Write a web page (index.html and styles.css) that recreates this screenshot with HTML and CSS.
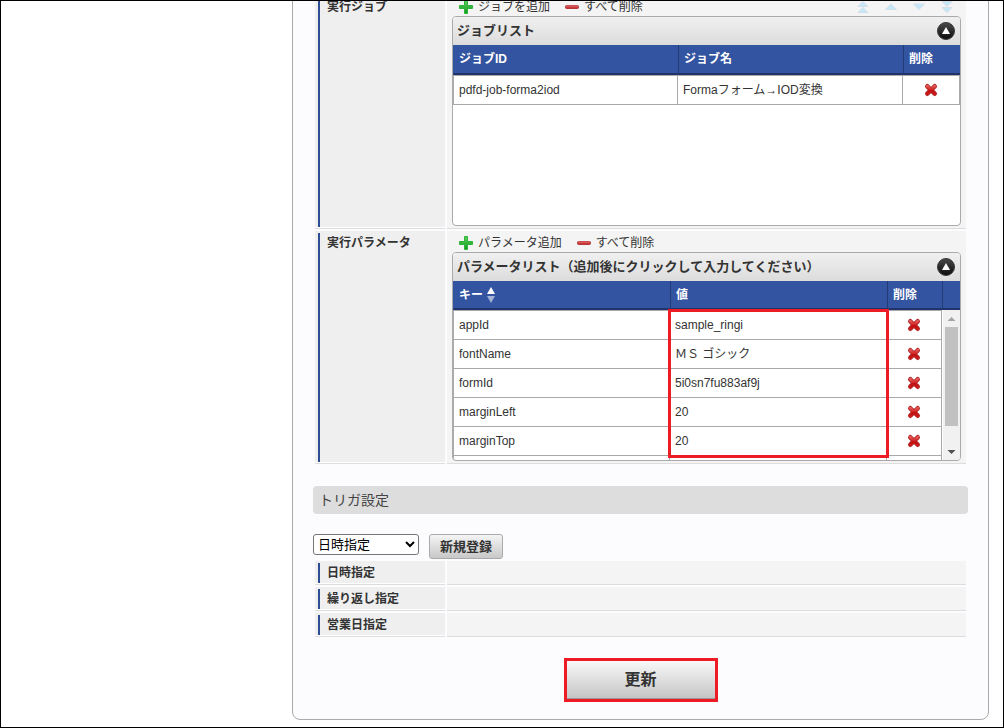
FILE: index.html
```html
<!DOCTYPE html>
<html lang="ja">
<head>
	<meta charset="utf-8">
	<title>ジョブネット編集</title>
	<link rel="stylesheet" href="styles.css">
</head>
<body>
	<!-- shared icons -->
	<svg class="defs" width="0" height="0">
		<defs>
			<linearGradient id="green" x1="0" y1="0" x2="0" y2="1">
				<stop offset="0" stop-color="#5fd05f"/>
				<stop offset="1" stop-color="#0c9a1c"/>
			</linearGradient>
			<linearGradient id="red" gradientUnits="userSpaceOnUse" x1="0" y1="2" x2="0" y2="14">
				<stop offset="0" stop-color="#ee7070"/>
				<stop offset="0.45" stop-color="#d42a2a"/>
				<stop offset="0.55" stop-color="#c01010"/>
				<stop offset="1" stop-color="#d02020"/>
			</linearGradient>
			<linearGradient id="dark" x1="0" y1="0" x2="0" y2="1">
				<stop offset="0" stop-color="#4a4a4a"/>
				<stop offset="1" stop-color="#0c0c0c"/>
			</linearGradient>
		</defs>
		<symbol id="plus" viewBox="0 0 16 16">
			<path d="M6.5 1.5h3v5h5v3h-5v5h-3v-5h-5v-3h5z" fill="url(#green)" stroke="#2db53a" stroke-linejoin="round"/>
		</symbol>
		<symbol id="minus" viewBox="0 0 16 16">
			<rect x="1.5" y="6.5" width="13" height="3" rx="1" fill="#c93a3a" stroke="#b53434"/>
			<path d="M2 7h12" stroke="#e07070"/>
		</symbol>
		<symbol id="cross" viewBox="0 0 16 16">
			<path d="M4.300 4.300l7.400 7.400M11.700 4.300l-7.400 7.400" stroke="#b02626" stroke-width="4.600" stroke-linecap="round"/>
			<path d="M4.300 4.300l7.400 7.400M11.700 4.300l-7.400 7.400" stroke="url(#red)" stroke-width="3" stroke-linecap="round"/>
		</symbol>
		<symbol id="collapse" viewBox="0 0 18 18">
			<circle cx="9" cy="9" r="8.500" fill="url(#dark)" stroke="#3a3a3a"/>
			<path d="M9 5l4 7h-8z" fill="#fff"/>
		</symbol>
		<symbol id="up" viewBox="0 0 16 16">
			<path d="M8 5l5.500 5.500h-11z" fill="#c5e8f8" stroke="#d3dfea" stroke-linejoin="round"/>
		</symbol>
		<symbol id="down" viewBox="0 0 16 16">
			<path d="M8 10.500l5.500-5.500h-11z" fill="#c5e8f8" stroke="#d3dfea" stroke-linejoin="round"/>
		</symbol>
		<symbol id="top" viewBox="0 0 16 16">
			<path d="M8 2.500l5 5H3zM8 8.500l5 5H3z" fill="#c5e8f8" stroke="#d3dfea" stroke-linejoin="round"/>
		</symbol>
		<symbol id="bottom" viewBox="0 0 16 16">
			<path d="M8 7.500l5-5H3zM8 13.500l5-5H3z" fill="#c5e8f8" stroke="#d3dfea" stroke-linejoin="round"/>
		</symbol>
	</svg>

	<main class="panel">
		<div class="form">
			<div class="row">
				<div class="label"><span>実行ジョブ</span></div>
				<div class="value">
					<div class="toolbar">
						<button type="button" class="tool"><svg><use href="#plus"/></svg>ジョブを追加</button>
						<button type="button" class="tool"><svg><use href="#minus"/></svg>すべて削除</button>
						<div class="order">
							<button type="button" class="tool" aria-label="先頭へ"><svg><use href="#top"/></svg></button>
							<button type="button" class="tool" aria-label="上へ"><svg><use href="#up"/></svg></button>
							<button type="button" class="tool" aria-label="下へ"><svg><use href="#down"/></svg></button>
							<button type="button" class="tool" aria-label="末尾へ"><svg><use href="#bottom"/></svg></button>
						</div>
					</div>
					<section class="list">
						<div class="list-title">
							<h2>ジョブリスト</h2>
							<button type="button" class="collapse" aria-label="折りたたむ"><svg><use href="#collapse"/></svg></button>
						</div>
						<div class="view job-view">
							<table>
								<thead>
									<tr><th>ジョブID</th><th>ジョブ名</th><th class="del">削除</th></tr>
								</thead>
								<tbody>
									<tr>
										<td>pdfd-job-forma2iod</td>
										<td>Formaフォーム→IOD変換</td>
										<td class="del"><button type="button" aria-label="削除"><svg><use href="#cross"/></svg></button></td>
									</tr>
								</tbody>
							</table>
						</div>
					</section>
				</div>
			</div>

			<div class="row">
				<div class="label"><span>実行パラメータ</span></div>
				<div class="value">
					<div class="toolbar">
						<button type="button" class="tool"><svg><use href="#plus"/></svg>パラメータ追加</button>
						<button type="button" class="tool"><svg><use href="#minus"/></svg>すべて削除</button>
					</div>
					<section class="list">
						<div class="list-title">
							<h2>パラメータリスト（追加後にクリックして入力してください）</h2>
							<button type="button" class="collapse" aria-label="折りたたむ"><svg><use href="#collapse"/></svg></button>
						</div>
						<div class="view param-view">
							<table>
								<thead>
									<tr>
										<th>キー<svg class="sort" viewBox="0 0 8 16"><path d="M4 0l4 7H0z" fill="#fff"/><path d="M4 16l4-7H0z" fill="#a5b3d6"/></svg></th>
										<th>値</th>
										<th class="del">削除</th>
									</tr>
								</thead>
								<tbody>
									<tr>
										<td>appId</td>
										<td class="marked">sample_ringi<div class="mark"></div></td>
										<td class="del"><button type="button" aria-label="削除"><svg><use href="#cross"/></svg></button></td>
									</tr>
									<tr>
										<td>fontName</td>
										<td>ＭＳ ゴシック</td>
										<td class="del"><button type="button" aria-label="削除"><svg><use href="#cross"/></svg></button></td>
									</tr>
									<tr>
										<td>formId</td>
										<td>5i0sn7fu883af9j</td>
										<td class="del"><button type="button" aria-label="削除"><svg><use href="#cross"/></svg></button></td>
									</tr>
									<tr>
										<td>marginLeft</td>
										<td>20</td>
										<td class="del"><button type="button" aria-label="削除"><svg><use href="#cross"/></svg></button></td>
									</tr>
									<tr>
										<td>marginTop</td>
										<td>20</td>
										<td class="del"><button type="button" aria-label="削除"><svg><use href="#cross"/></svg></button></td>
									</tr>
									<tr><td></td><td></td><td></td></tr>
								</tbody>
							</table>
							<div class="side">
								<div class="side-head"></div>
								<div class="scrollbar">
									<svg viewBox="0 0 17 17"><path d="M8.500 7l4 4h-8z" fill="#a3a3a3"/></svg>
									<div class="thumb"></div>
									<svg viewBox="0 0 17 17"><path d="M8.500 11l4-4h-8z" fill="#505050"/></svg>
								</div>
							</div>
						</div>
					</section>
				</div>
			</div>
		</div>

		<h1>トリガ設定</h1>

		<div class="trigger">
			<select aria-label="トリガ種別">
				<option>日時指定</option>
				<option>繰り返し指定</option>
				<option>営業日指定</option>
			</select>
			<button type="button" class="btn">新規登録</button>
		</div>

		<div class="form">
			<div class="row"><div class="label"><span>日時指定</span></div><div class="value"></div></div>
			<div class="row"><div class="label"><span>繰り返し指定</span></div><div class="value"></div></div>
			<div class="row"><div class="label"><span>営業日指定</span></div><div class="value"></div></div>
		</div>

		<div class="submit">
			<button type="submit" class="update">更新</button>
		</div>
	</main>
</body>
</html>
```

FILE: styles.css
```css
* {
	box-sizing: border-box;
	margin: 0;
	padding: 0;
}

body {
	min-height: 100vh;
	padding: 0 14px 7px 291px;
	border: 1px solid #000;
	background: #fff;
	font: 12px/18px "Liberation Sans", "Noto Sans CJK JP", sans-serif;
	color: #333;
	overflow: hidden;
}

button {
	border: 0;
	background: none;
	font: inherit;
	color: inherit;
	cursor: pointer;
}

svg {
	display: block;
	flex: none;
	width: 16px;
	height: 16px;
}

.defs {
	position: absolute;
	width: 0;
	height: 0;
}

.panel {
	margin-top: -9px;
	padding: 0 20px 17px;
	border: 1px solid #aaa;
	border-radius: 0 0 8px 8px;
	background: #fcfcff;
}

/* label / value rows */
.form {
	padding: 2px 2px 0;
}

.row {
	display: grid;
	grid-template-columns: 130px 1fr;
	gap: 2px;
	min-height: 24px;
	margin-bottom: 2px;
}

.label {
	display: flex;
	padding: 2px 0 1px 3px;
	border-bottom: 1px solid #ddd;
	background: #efefef;
	box-shadow: inset 0 -1px #fff;
	font-weight: bold;
	line-height: 20px;
}

.label span {
	padding-left: 7px;
	border-left: 2px solid #2e4e94;
}

.value {
	padding: 0 5px;
	border-bottom: 1px solid #ddd;
	background: #f4f4f4;
}

.toolbar {
	display: flex;
	gap: 14px;
	height: 21px;
	padding: 2px 6px 0;
}

.tool {
	display: flex;
	align-items: center;
	gap: 4px;
	height: 20px;
}

.order {
	display: flex;
	gap: 12px;
	margin-left: auto;
}

/* lists */
.list {
	margin-bottom: 2px;
	border: 1px solid #aaa;
	border-radius: 4px;
	background: #fff;
	overflow: hidden;
}

.list-title {
	display: flex;
	align-items: center;
	justify-content: space-between;
	height: 28px;
	padding: 0 5px 0 4px;
	background: linear-gradient(#f0f0f0, #dcdcdc);
}

.list-title h2 {
	font-size: 13px;
}

.collapse svg {
	width: 18px;
	height: 18px;
}

.view {
	overflow: hidden;
}

.job-view {
	height: 180px;
}

.param-view {
	display: grid;
	grid-template-columns: 1fr 18px;
	grid-template-rows: 100%;
	align-items: start;
	height: 179px;
}

table {
	width: 100%;
	border-collapse: separate;
	border-spacing: 0;
	table-layout: fixed;
}

th, td {
	padding: 0 5px;
	text-align: left;
}

th {
	height: 29px;
	border-left: 1px solid #233c75;
	border-bottom: 2px solid #20336a;
	background: #3354a0;
	color: #fff;
}

.job-view th {
	height: 30px;
}

th:first-child {
	border-left-color: #3354a0;
}

td {
	height: 29px;
	border-right: 1px solid #aaa;
	border-bottom: 1px solid #aaa;
}

td:first-child {
	border-left: 1px solid #aaa;
}

tbody tr:first-child td {
	height: 30px;
	border-top: 1px solid #aaa;
}

.del {
	width: 55px;
}

.job-view .del {
	width: 57px;
}

.del button {
	display: block;
	margin: 0 auto;
}

.sort {
	display: inline-block;
	width: 8px;
	margin-left: 4px;
	vertical-align: middle;
}

/* red frame round the value column */
.marked {
	position: relative;
}

.mark {
	position: absolute;
	z-index: 1;
	top: -2px;
	left: -2px;
	right: -3px;
	height: 149px;
	border: 3px solid #ed1c24;
}

.side {
	display: flex;
	flex-direction: column;
	height: 100%;
}

.side-head {
	height: 29px;
	border-left: 1px solid #233c75;
	border-bottom: 2px solid #20336a;
	background: #3354a0;
}

.scrollbar {
	display: flex;
	flex-direction: column;
	flex: 1;
	margin-left: 1px;
	background: #f1f1f1;
}

.scrollbar svg {
	width: 17px;
	height: 17px;
}

.thumb {
	height: 99px;
	margin: 0 2px auto;
	background: #c1c1c1;
}

/* trigger settings */
h1 {
	height: 28px;
	margin-top: 22px;
	padding: 0 6px;
	border-radius: 4px;
	background: #ddd;
	font-size: 14px;
	font-weight: normal;
	line-height: 28px;
	color: #444;
}

.trigger {
	display: flex;
	align-items: flex-start;
	gap: 10px;
	margin-top: 20px;
}

select {
	width: 106px;
	height: 21px;
	border: 1px solid #767676;
	border-radius: 3px;
	background: #fff;
	font: 13px "Liberation Sans", "Noto Sans CJK JP", sans-serif;
	color: #000;
}

.btn {
	height: 25px;
	padding: 0 10px;
	border: 1px solid #aaa;
	border-radius: 3px;
	background: linear-gradient(#f4f4f4, #c8c8c8);
	font-size: 13px;
	font-weight: bold;
}

.submit {
	display: flex;
	justify-content: center;
	margin-top: 21px;
}

.update {
	width: 154px;
	height: 44px;
	border: 3px solid #ed1c24;
	background: linear-gradient(#f8f8f8, #c4c4c4);
	box-shadow: inset 0 -1px #999;
	font-size: 16px;
	font-weight: bold;
}
```
